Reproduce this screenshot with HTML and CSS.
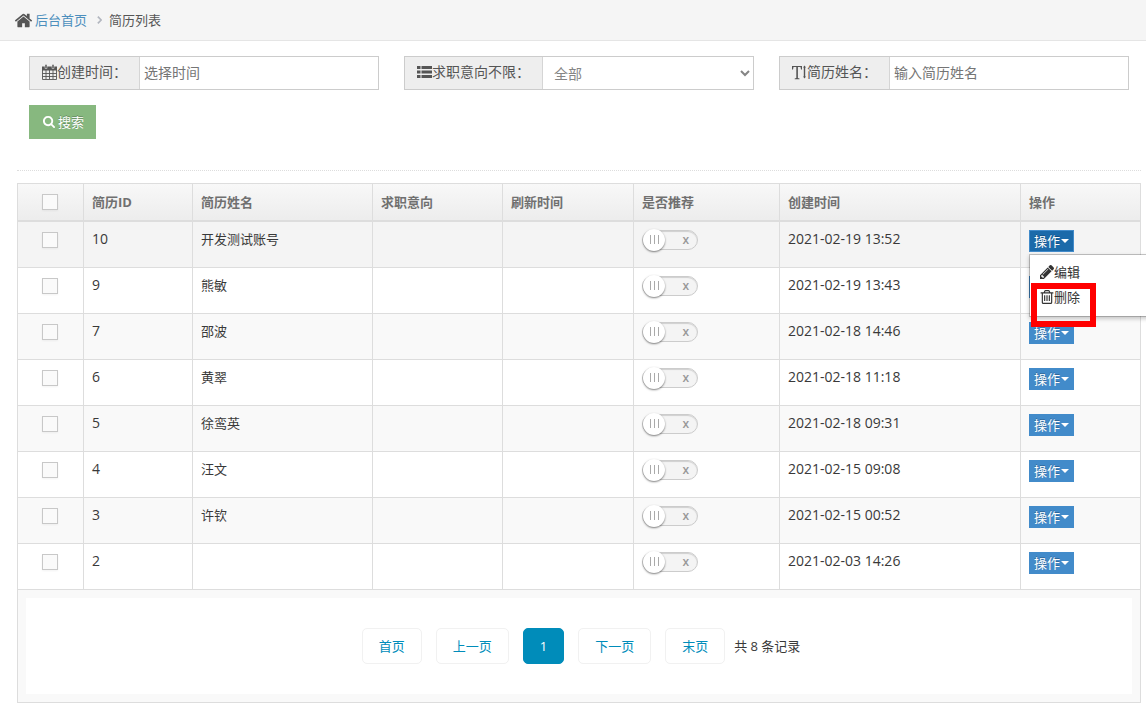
FILE: index.html
```html
<!DOCTYPE html>
<html lang="zh-CN">
<head>
<meta charset="utf-8">
<title>简历列表</title>
<link rel="stylesheet" href="styles.css">
</head>
<body>
<svg class="sprite" aria-hidden="true">
  <symbol id="home" viewBox="0 0 1792 1792"><path d="M1472 992v480q0 26-19 45t-45 19h-384v-384h-256v384h-384q-26 0-45-19t-19-45v-480q0-1 .5-3t.5-3l575-474 575 474q1 2 1 6zm223-69l-62 74q-8 9-21 11h-3q-13 0-21-7l-692-577-692 577q-12 8-24 7-13-2-21-11l-62-74q-8-10-7-23.500t11-21.500l719-599q32-26 76-26t76 26l244 204v-195q0-14 9-23t23-9h192q14 0 23 9t9 23v408l219 182q10 8 11 21.500t-7 23.500z"/></symbol>
  <symbol id="calendar" viewBox="0 0 15 16"><path d="M.5 3.500h14v12H.5zM.5 9.500h14M.5 12.500h14M4 6v9M7.500 6v9M11 6v9" fill="none" stroke="currentColor" stroke-width=".9"/><path d="M0 2.500h15v4H0z"/><path d="M3 .5h2v4H3zM10 .5h2v4h-2z" stroke="#eee" stroke-width=".5"/></symbol>
  <symbol id="list" viewBox="0 0 15 14"><path d="M0 1h3.500v3H0zM0 5.500h3.500v3H0zM0 10h3.500v3H0zM4.500 1H15v3H4.500zM4.500 5.500H15v3H4.500zM4.500 10H15v3H4.500z"/></symbol>
  <symbol id="height" viewBox="0 0 15 16"><path d="M0 2h10v3.500H9L8.500 3H5.900v11l1.600.4v.8H2.700v-.8l1.600-.4V3H1.500L1 5.500H0zM12.500 1.500l1.500 2h-.8v9h.8l-1.500 2-1.500-2h.8v-9H11z"/></symbol>
  <symbol id="search" viewBox="0 0 1792 1792"><path d="M1216 832q0-185-131.500-316.500t-316.500-131.500-316.500 131.500-131.500 316.500 131.500 316.500 316.500 131.500 316.500-131.500 131.500-316.500zm512 832q0 52-38 90t-90 38q-54 0-90-38l-343-342q-179 124-399 124-143 0-273.500-55.500t-225-150-150-225-55.500-273.500 55.500-273.500 150-225 225-150 273.500-55.500 273.500 55.500 225 150 150 225 55.500 273.500q0 220-124 399l343 343q37 37 37 90z"/></symbol>
  <symbol id="pencil" viewBox="128 149 1515 1515"><path d="M491 1536l91-91-235-235-91 91v107h128v128h107zm523-928q0-22-22-22-10 0-17 7l-542 542q-7 7-7 17 0 22 22 22 10 0 17-7l542-542q7-7 7-17zm-54-192l416 416-832 832h-416v-416zm683 96q0 53-37 90l-166 166-416-416 166-165q36-38 90-38 53 0 91 38l235 234q37 39 37 91z"/></symbol>
  <symbol id="trash" viewBox="128 128 1536 1536"><path d="M704 736v576q0 14-9 23t-23 9h-64q-14 0-23-9t-9-23v-576q0-14 9-23t23-9h64q14 0 23 9t9 23zm256 0v576q0 14-9 23t-23 9h-64q-14 0-23-9t-9-23v-576q0-14 9-23t23-9h64q14 0 23 9t9 23zm256 0v576q0 14-9 23t-23 9h-64q-14 0-23-9t-9-23v-576q0-14 9-23t23-9h64q14 0 23 9t9 23zm128 724v-948h-896v948q0 22 7 40.500t14.500 27 10.500 8.500h832q3 0 10.500-8.500t14.500-27 7-40.500zm-672-1076h448l-48-117q-7-9-17-11h-317q-10 2-17 11zm928 32v64q0 14-9 23t-23 9h-96v948q0 83-47 143.500t-113 60.500h-832q-66 0-113-58.500t-47-141.500v-952h-96q-14 0-23-9t-9-23v-64q0-14 9-23t23-9h309l70-167q15-37 54-63t79-26h320q40 0 79 26t54 63l70 167h309q14 0 23 9t9 23z"/></symbol>
</svg>

<nav class="breadcrumbs" aria-label="面包屑">
  <svg class="icon icon-home"><use href="#home"/></svg>
  <a href="#">后台首页</a>
  <svg class="separator" viewBox="0 0 6 10"><path d="M1 1l4 4-4 4"/></svg>
  <span>简历列表</span>
</nav>

<main class="page">
  <form class="filters">
    <div class="group">
      <label class="addon" for="created"><svg class="icon icon-label"><use href="#calendar"/></svg>创建时间：</label>
      <input class="field" id="created" type="text" placeholder="选择时间">
    </div>
    <div class="group">
      <label class="addon" for="intent"><svg class="icon icon-label"><use href="#list"/></svg>求职意向不限：</label>
      <select class="field field-select" id="intent"><option>全部</option></select>
    </div>
    <div class="group">
      <label class="addon" for="name"><svg class="icon icon-label"><use href="#height"/></svg>简历姓名：</label>
      <input class="field" id="name" type="text" placeholder="输入简历姓名">
    </div>
    <button class="search" type="button"><svg class="icon icon-search"><use href="#search"/></svg>搜索</button>
  </form>

  <hr class="divider">

  <table class="resumes">
    <colgroup>
      <col class="col-check"><col class="col-id"><col class="col-name"><col class="col-intent"><col class="col-refresh"><col class="col-switch"><col class="col-created"><col class="col-action">
    </colgroup>
    <thead>
      <tr><th class="check-cell"><input class="check" type="checkbox" aria-label="全选"></th><th>简历ID</th><th>简历姓名</th><th>求职意向</th><th>刷新时间</th><th>是否推荐</th><th>创建时间</th><th>操作</th></tr>
    </thead>
    <tbody>
      <tr class="hovered"><td class="check-cell"><input class="check" type="checkbox" aria-label="选择 10"></td><td class="number">10</td><td>开发测试账号</td><td></td><td></td><td><input class="switch" type="checkbox" aria-label="是否推荐"></td><td class="number">2021-02-19 13:52</td>
        <td><div class="dropdown"><button class="action open" type="button" aria-expanded="true">操作</button>
          <ul class="menu">
            <li><a href="#"><svg class="icon icon-menu"><use href="#pencil"/></svg>编辑</a></li>
            <li class="marked"><a href="#"><svg class="icon icon-menu"><use href="#trash"/></svg>删除</a></li>
          </ul></div></td></tr>
      <tr><td class="check-cell"><input class="check" type="checkbox" aria-label="选择 9"></td><td class="number">9</td><td>熊敏</td><td></td><td></td><td><input class="switch" type="checkbox" aria-label="是否推荐"></td><td class="number">2021-02-19 13:43</td><td><button class="action" type="button">操作</button></td></tr>
      <tr><td class="check-cell"><input class="check" type="checkbox" aria-label="选择 7"></td><td class="number">7</td><td>邵波</td><td></td><td></td><td><input class="switch" type="checkbox" aria-label="是否推荐"></td><td class="number">2021-02-18 14:46</td><td><button class="action" type="button">操作</button></td></tr>
      <tr><td class="check-cell"><input class="check" type="checkbox" aria-label="选择 6"></td><td class="number">6</td><td>黄翠</td><td></td><td></td><td><input class="switch" type="checkbox" aria-label="是否推荐"></td><td class="number">2021-02-18 11:18</td><td><button class="action" type="button">操作</button></td></tr>
      <tr><td class="check-cell"><input class="check" type="checkbox" aria-label="选择 5"></td><td class="number">5</td><td>徐鸾英</td><td></td><td></td><td><input class="switch" type="checkbox" aria-label="是否推荐"></td><td class="number">2021-02-18 09:31</td><td><button class="action" type="button">操作</button></td></tr>
      <tr><td class="check-cell"><input class="check" type="checkbox" aria-label="选择 4"></td><td class="number">4</td><td>汪文</td><td></td><td></td><td><input class="switch" type="checkbox" aria-label="是否推荐"></td><td class="number">2021-02-15 09:08</td><td><button class="action" type="button">操作</button></td></tr>
      <tr><td class="check-cell"><input class="check" type="checkbox" aria-label="选择 3"></td><td class="number">3</td><td>许钦</td><td></td><td></td><td><input class="switch" type="checkbox" aria-label="是否推荐"></td><td class="number">2021-02-15 00:52</td><td><button class="action" type="button">操作</button></td></tr>
      <tr><td class="check-cell"><input class="check" type="checkbox" aria-label="选择 2"></td><td class="number">2</td><td></td><td></td><td></td><td><input class="switch" type="checkbox" aria-label="是否推荐"></td><td class="number">2021-02-03 14:26</td><td><button class="action" type="button">操作</button></td></tr>
    </tbody>
    <tfoot>
      <tr><td colspan="8">
        <div class="pager">
          <a class="page-link" href="#">首页</a>
          <a class="page-link" href="#">上一页</a>
          <span class="page-link current" aria-current="page">1</span>
          <a class="page-link" href="#">下一页</a>
          <a class="page-link" href="#">末页</a>
          <span class="total">共 8 条记录</span>
        </div>
      </td></tr>
    </tfoot>
  </table>
</main>
</body>
</html>
```
FILE: styles.css
```css
*, *::before, *::after { box-sizing: border-box; }
body {
  margin: 0;
  overflow-x: hidden;
  background: #fff;
  color: #393939;
  font: 13px/18px "Open Sans", "Noto Sans CJK SC", sans-serif;
}
button, input, select { font-family: inherit; margin: 0; }
a { text-decoration: none; }
.sprite { display: none; }
.icon { flex: none; fill: currentColor; color: #555; }

.breadcrumbs {
  display: flex;
  align-items: center;
  height: 41px;
  padding-left: 14px;
  background: #f5f5f5;
  border-bottom: 1px solid #e5e5e5;
  color: #555;
}
.breadcrumbs a { color: #4c8fbd; margin: 0 10px 0 2px; }
.icon-home { width: 19px; height: 19px; }
.separator { width: 5px; height: 10px; margin-right: 7px; fill: none; stroke: #b2b6bf; stroke-width: 2; }

.page { padding: 15px 5px 0 17px; }
.filters {
  display: grid;
  grid-template-columns: repeat(3, minmax(0, 1fr));
  gap: 15px 25px;
  padding: 0 12px;
}
.group { display: flex; height: 34px; border: 1px solid #ccc; }
.addon {
  display: flex;
  flex: none;
  align-items: center;
  padding: 0 12px 2px;
  background: #eee;
  border-right: 1px solid #d5d5d5;
  color: #555;
  font-size: 14px;
}
.icon-label { width: 15px; height: 16px; }
.field {
  flex: 1;
  min-width: 0;
  padding: 0 4px 2px;
  border: 0;
  border-radius: 0;
  background: #fff;
  color: #858585;
  font-size: 14px;
}
.field::placeholder { color: #757575; }
.field-select { padding: 0 0 0 7px; }
.search {
  display: flex;
  align-items: center;
  justify-self: start;
  gap: 2px;
  height: 34px;
  padding: 0 12px 2px 13px;
  border: 0;
  background: #87b87f;
  color: #fff;
  font-size: 13px;
  text-shadow: 0 -1px 0 rgba(0, 0, 0, .25);
}
.icon-search { width: 14px; height: 13px; color: #fff; }
.divider { margin: 31px 0 12px; border: 0; border-top: 1px dotted #ddd; }

.resumes { width: 100%; table-layout: fixed; border-collapse: collapse; }
.col-check { width: 66px; }
.col-id { width: 109px; }
.col-name { width: 180px; }
.col-intent { width: 130px; }
.col-refresh { width: 131px; }
.col-switch { width: 146px; }
.col-created { width: 241px; }
.col-action { width: 120px; }
.resumes th, .resumes td { border: 1px solid #ddd; padding: 8px; }
.resumes th {
  height: 37px;
  border-bottom-width: 2px;
  color: #707070;
  text-align: left;
}
.resumes thead tr { background: linear-gradient(#f8f8f8, #ececec); }
.resumes tbody tr { height: 46px; }
.resumes tbody td { vertical-align: top; }
.resumes tbody tr:nth-child(odd), .resumes tfoot tr { background: #f9f9f9; }
.resumes tbody tr.hovered { background: #f4f4f4; }
.resumes .check-cell { padding-right: 10px; }
.resumes .number { font-size: 14px; }
.check {
  display: block;
  appearance: none;
  width: 16px;
  height: 16px;
  margin: 2px auto;
  border: 1px solid #c8c8c8;
  background: #fafafa;
  box-shadow: 0 1px 2px rgba(0, 0, 0, .05);
}

.switch {
  display: block;
  position: relative;
  appearance: none;
  width: 56px;
  height: 20px;
  border: 1px solid #ccc;
  border-radius: 10px;
  background: #f4f4f4;
  box-shadow: inset 0 1px 1px rgba(0, 0, 0, .15);
}
.switch::before {
  content: "";
  position: absolute;
  top: -2px;
  left: 0;
  width: 22px;
  height: 22px;
  border-radius: 50%;
  background:
    linear-gradient(#aaa, #aaa) 7px 6px / 1px 9px no-repeat,
    linear-gradient(#aaa, #aaa) 11px 6px / 1px 9px no-repeat,
    linear-gradient(#aaa, #aaa) 15px 6px / 1px 9px no-repeat,
    #fff;
  box-shadow: 0 1px 2px rgba(0, 0, 0, .5);
}
.switch::after {
  content: "x";
  position: absolute;
  top: 0;
  right: 8px;
  color: #999;
  font: 600 12px/17px "Open Sans", sans-serif;
}

.action {
  display: flex;
  align-items: center;
  gap: 1px;
  height: 22px;
  padding: 0 5px;
  border: 0;
  background: #428bca;
  color: #fff;
  font-size: 13px;
  line-height: 20px;
  text-shadow: 0 -1px 0 rgba(0, 0, 0, .25);
}
.action::after {
  content: "";
  border: 4px solid transparent;
  border-top-color: #fff;
  border-bottom: 0;
}
.action.open { background: #1b6aaa; border: 1px solid #428bca; padding: 0 4px; }
.dropdown { position: relative; }
.menu {
  position: absolute;
  z-index: 2;
  top: 100%;
  left: 0;
  min-width: 160px;
  margin: 2px 0 0;
  padding: 5px 0 6px;
  border: 1px solid rgba(0, 0, 0, .2);
  background: #fff;
  background-clip: padding-box;
  box-shadow: 0 2px 4px rgba(0, 0, 0, .2);
  list-style: none;
}
.menu a { display: flex; align-items: center; height: 25px; padding: 0 10px 2px; color: #333; }
.icon-menu { width: 14px; height: 14px; color: #333; }
.marked { position: relative; }
.marked::after {
  content: "";
  position: absolute;
  top: -2px;
  left: 1px;
  width: 65px;
  height: 44px;
  border: 6px solid #f00;
  pointer-events: none;
}

.pager {
  display: flex;
  align-items: center;
  justify-content: center;
  gap: 14px;
  padding: 30px 0;
  background: #fff;
}
.page-link {
  padding: 8px 16px;
  border: 1px solid #f1f1f1;
  border-radius: 5px;
  color: #008cba;
}
.page-link.current { background: #008cba; border-color: #008cba; color: #fff; }
.total { margin: 0 -4px 0 -5px; }
```
